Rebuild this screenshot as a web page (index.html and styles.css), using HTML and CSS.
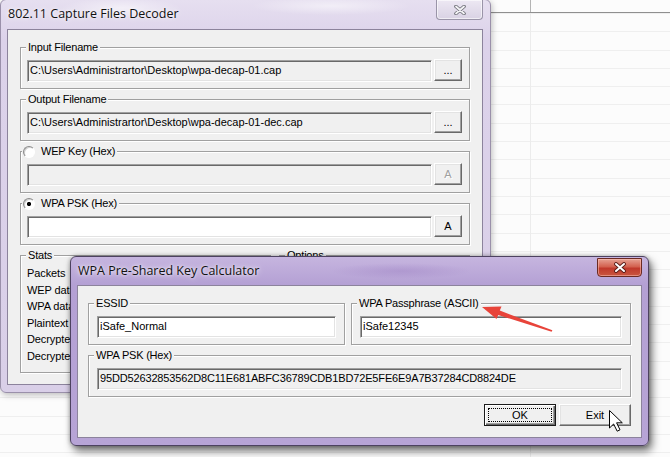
FILE: index.html
```html
<!DOCTYPE html>
<html>
<head>
<meta charset="utf-8">
<link rel="stylesheet" href="styles.css">
</head>
<body>
<div class="desktop">
  <div class="win back">
    <div class="titlebar">
      <span class="title">802.11 Capture Files Decoder</span>
      <div class="close close-inactive">
        <svg width="12" height="10" viewBox="0 0 12 10"><path d="M2 1.5 L10 8.5 M10 1.5 L2 8.5" stroke="#6f6f78" stroke-width="3.6" stroke-linecap="round"/><path d="M2 1.5 L10 8.5 M10 1.5 L2 8.5" stroke="#f4f4f6" stroke-width="1.8" stroke-linecap="round"/></svg>
      </div>
    </div>
    <div class="client back-client">
      <div class="group">
        <span class="glabel">Input Filename</span>
        <div class="field ro">C:\Users\Administrartor\Desktop\wpa-decap-01.cap</div>
        <div class="btn small">...</div>
      </div>
      <div class="group">
        <span class="glabel">Output Filename</span>
        <div class="field ro">C:\Users\Administrartor\Desktop\wpa-decap-01-dec.cap</div>
        <div class="btn small">...</div>
      </div>
      <div class="group">
        <span class="glabel radio-label"><span class="radio"></span>WEP Key (Hex)</span>
        <div class="field ro"></div>
        <div class="btn small disabled">A</div>
      </div>
      <div class="group">
        <span class="glabel radio-label"><span class="radio checked"></span>WPA PSK (Hex)</span>
        <div class="field"></div>
        <div class="btn small">A</div>
      </div>
      <div class="bottom-row">
        <div class="group stats">
          <span class="glabel">Stats</span>
          <div class="stat">Packets</div>
          <div class="stat">WEP data</div>
          <div class="stat">WPA data</div>
          <div class="stat">Plaintext</div>
          <div class="stat">Decrypted</div>
          <div class="stat">Decrypted</div>
        </div>
        <div class="group options">
          <span class="glabel">Options</span>
        </div>
      </div>
    </div>
  </div>

  <div class="win front">
    <div class="titlebar front-title">
      <span class="title">WPA Pre-Shared Key Calculator</span>
      <div class="close close-active">
        <svg width="14" height="11" viewBox="0 0 14 11"><path d="M3 2 L11 9 M11 2 L3 9" stroke="#5a1e18" stroke-width="3.8" stroke-linecap="round"/><path d="M3 2 L11 9 M11 2 L3 9" stroke="#ffffff" stroke-width="2" stroke-linecap="round"/></svg>
      </div>
    </div>
    <div class="client front-client">
      <div class="top-row">
        <div class="group fgroup essid">
          <span class="glabel">ESSID</span>
          <div class="field">iSafe_Normal</div>
        </div>
        <div class="group fgroup pass">
          <span class="glabel">WPA Passphrase (ASCII)</span>
          <div class="field">iSafe12345</div>
        </div>
      </div>
      <div class="group fgroup psk">
        <span class="glabel">WPA PSK (Hex)</span>
        <div class="field ro hex">95DD52632853562D8C11E681ABFC36789CDB1BD72E5FE6E9A7B37284CD8824DE</div>
      </div>
      <div class="btn-row">
        <div class="btn wide default"><span class="focus">OK</span></div>
        <div class="btn wide">Exit</div>
      </div>
    </div>
  </div>

  <svg class="overlay" width="670" height="457" viewBox="0 0 670 457">
    <polygon points="482,307 501.5,306.5 499.8,310.6 552.4,330.2 551.6,331.8 498.2,315 496.5,319" fill="#e8443a"/>
    <path d="M609.5 410.5 L609.5 428 L613.6 424 L617.2 431.2 L620 429.8 L616.6 422.8 L622.3 422.8 Z" fill="#ffffff" stroke="#000000" stroke-width="1" stroke-linejoin="round"/>
  </svg>
</div>
</body>
</html>
```

FILE: styles.css
```css
* { box-sizing: border-box; }
html, body { margin: 0; padding: 0; }
body {
  width: 670px;
  height: 457px;
  overflow: hidden;
  font-family: "Liberation Sans", Arial, sans-serif;
  font-size: 11px;
  color: #000;
}

.desktop {
  position: relative;
  width: 670px;
  height: 457px;
  overflow: hidden;
  background:
    linear-gradient(#8f8f8f, #8f8f8f) 0 12px / 100% 1px no-repeat,
    linear-gradient(#b4b4b4, #b4b4b4) 530px 0 / 1px 12px no-repeat,
    linear-gradient(#ececec, #ececec) 530px 13px / 1px 100% no-repeat,
    repeating-linear-gradient(to bottom, #efefef 0 1px, transparent 1px 18.3px) 0 13px / 100% 100% no-repeat,
    #fcfcfc;
}

/* windows */
.win {
  position: absolute;
  display: flex;
  flex-direction: column;
}

.back {
  left: 0;
  top: -1px;
  width: 491px;
  height: 394px;
  padding: 0 7px 7px 6px;
  border: 1px solid #9a90aa;
  border-radius: 6px;
  background:
    radial-gradient(ellipse 60px 10px at 120px 8px, rgba(255,255,255,.55), transparent),
    radial-gradient(ellipse 80px 9px at 330px 6px, rgba(255,255,255,.5), transparent),
    linear-gradient(#e6dff0, #dcd2ea 40px, #d9cfe8);
  box-shadow: 1px 2px 6px rgba(0,0,0,.25);
}

.front {
  left: 70px;
  top: 256px;
  width: 579px;
  height: 190px;
  padding: 0 6px 7px 6px;
  border: 1px solid #4d4260;
  border-radius: 6px;
  background:
    radial-gradient(ellipse 70px 8px at 330px 14px, rgba(150,120,190,.35), transparent),
    linear-gradient(#c6b5df, #b4a0d4 28px, #b7a4d6);
  box-shadow: 3px 5px 8px rgba(0,0,0,.55), 0 0 4px rgba(0,0,0,.3);
}

.titlebar {
  display: flex;
  align-items: flex-start;
  height: 29px;
  flex: none;
}
.front-title { height: 28px; }

.title {
  font-family: "Open Sans", "Noto Sans", sans-serif;
  font-size: 12.5px;
  line-height: 28px;
  padding-left: 1px;
  color: #111;
  text-shadow: 0 0 6px rgba(255,255,255,.9), 0 0 3px rgba(255,255,255,.8);
}
.front-title .title { line-height: 28px; }

.close {
  margin-left: auto;
  display: flex;
  align-items: center;
  justify-content: center;
  border-radius: 0 0 4px 4px;
}
.close-inactive {
  width: 47px;
  height: 20px;
  border: 1px solid #9a94a8;
  border-top: none;
  background: linear-gradient(#ede8f3, #d9d2e4);
  box-shadow: inset 0 0 0 1px rgba(255,255,255,.6);
}
.close-active {
  width: 45px;
  height: 19px;
  margin-top: 1px;
  border: 1px solid #6b2a22;
  background: linear-gradient(#e6a192, #d3614f 45%, #c0392b 55%, #c9563f);
  box-shadow: inset 0 0 0 1px rgba(255,200,190,.5);
}

.client {
  flex: 1;
  background: #f0f0f0;
  border: 1px solid #8c839c;
  display: flex;
  flex-direction: column;
}
.back-client { padding: 17px 12px 11px 12px; gap: 10px; }
.front-client { padding: 17px 10px 11px 10px; }

/* group boxes */
.group {
  position: relative;
  flex: none;
  height: 42px;
  display: flex;
  align-items: center;
  gap: 2px;
  padding: 12px 7px 6px 6px;
  border: 1px solid #a0a0a0;
  box-shadow: inset 1px 1px 0 #fff, 1px 1px 0 #fff;
}
.glabel {
  position: absolute;
  top: -7px;
  left: 5px;
  padding: 0 2px;
  line-height: 13px;
  background: #f0f0f0;
  letter-spacing: -0.2px;
  white-space: nowrap;
  display: flex;
  align-items: center;
}
.radio-label { left: 1px; padding-left: 1px; gap: 6px; }
.radio {
  width: 12px;
  height: 12px;
  border-radius: 50%;
  border: 1px solid;
  border-color: #8a8a8a #fff #fff #8a8a8a;
  background: #fff;
  box-shadow: inset 1px 1px 0 #d0d0d0;
}
.radio.checked {
  background: radial-gradient(circle at 50% 50%, #000 0 1.8px, #fff 2.4px);
}

/* fields */
.field {
  flex: 1;
  height: 22px;
  line-height: 19px;
  padding-left: 2px;
  background: #fff;
  border: 1px solid;
  border-color: #a0a0a0 #fff #fff #a0a0a0;
  box-shadow: inset 1px 1px 0 #696969, inset -1px -1px 0 #e3e3e3;
  letter-spacing: 0;
  white-space: nowrap;
  overflow: hidden;
}
.field.ro { background: #f0f0f0; }
.hex { letter-spacing: -0.15px; }

/* buttons */
.btn {
  flex: none;
  height: 22px;
  display: flex;
  align-items: center;
  justify-content: center;
  background: #f0f0f0;
  border: 1px solid;
  border-color: #fff #696969 #696969 #fff;
  box-shadow: inset -1px -1px 0 #a0a0a0, inset 1px 1px 0 #e3e3e3;
}
.btn.small { width: 28px; margin-top: -2px; }
.btn.disabled { color: #a0a0a0; text-shadow: 1px 1px 0 #fff; }

.bottom-row {
  display: flex;
  gap: 8px;
}
.stats {
  width: 251px;
  height: 118px;
  flex-direction: column;
  align-items: flex-start;
  justify-content: flex-start;
  gap: 0;
  padding: 9px 6px 0 6px;
}
.stat { line-height: 16.6px; letter-spacing: -0.1px; }
.options { flex: 1; height: 118px; }

/* front dialog */
.top-row { display: flex; gap: 6px; }
.fgroup { padding: 12px 8px 6px 8px; }
.essid { width: 257px; }
.pass { flex: 1; }
.psk { margin-top: 10px; }

.btn-row {
  display: flex;
  justify-content: flex-end;
  gap: 3px;
  margin-top: 7px;
}
.btn.wide { width: 72px; }
.btn.default {
  border-color: #1a1a1a;
  box-shadow: inset 1px 1px 0 #fff, inset -1px -1px 0 #696969, inset -2px -2px 0 #a0a0a0;
  padding: 3px;
}
.focus {
  flex: 1;
  align-self: stretch;
  display: flex;
  align-items: center;
  justify-content: center;
  border: 1px dotted #000;
}

.overlay {
  position: absolute;
  left: 0;
  top: 0;
  pointer-events: none;
}
```
